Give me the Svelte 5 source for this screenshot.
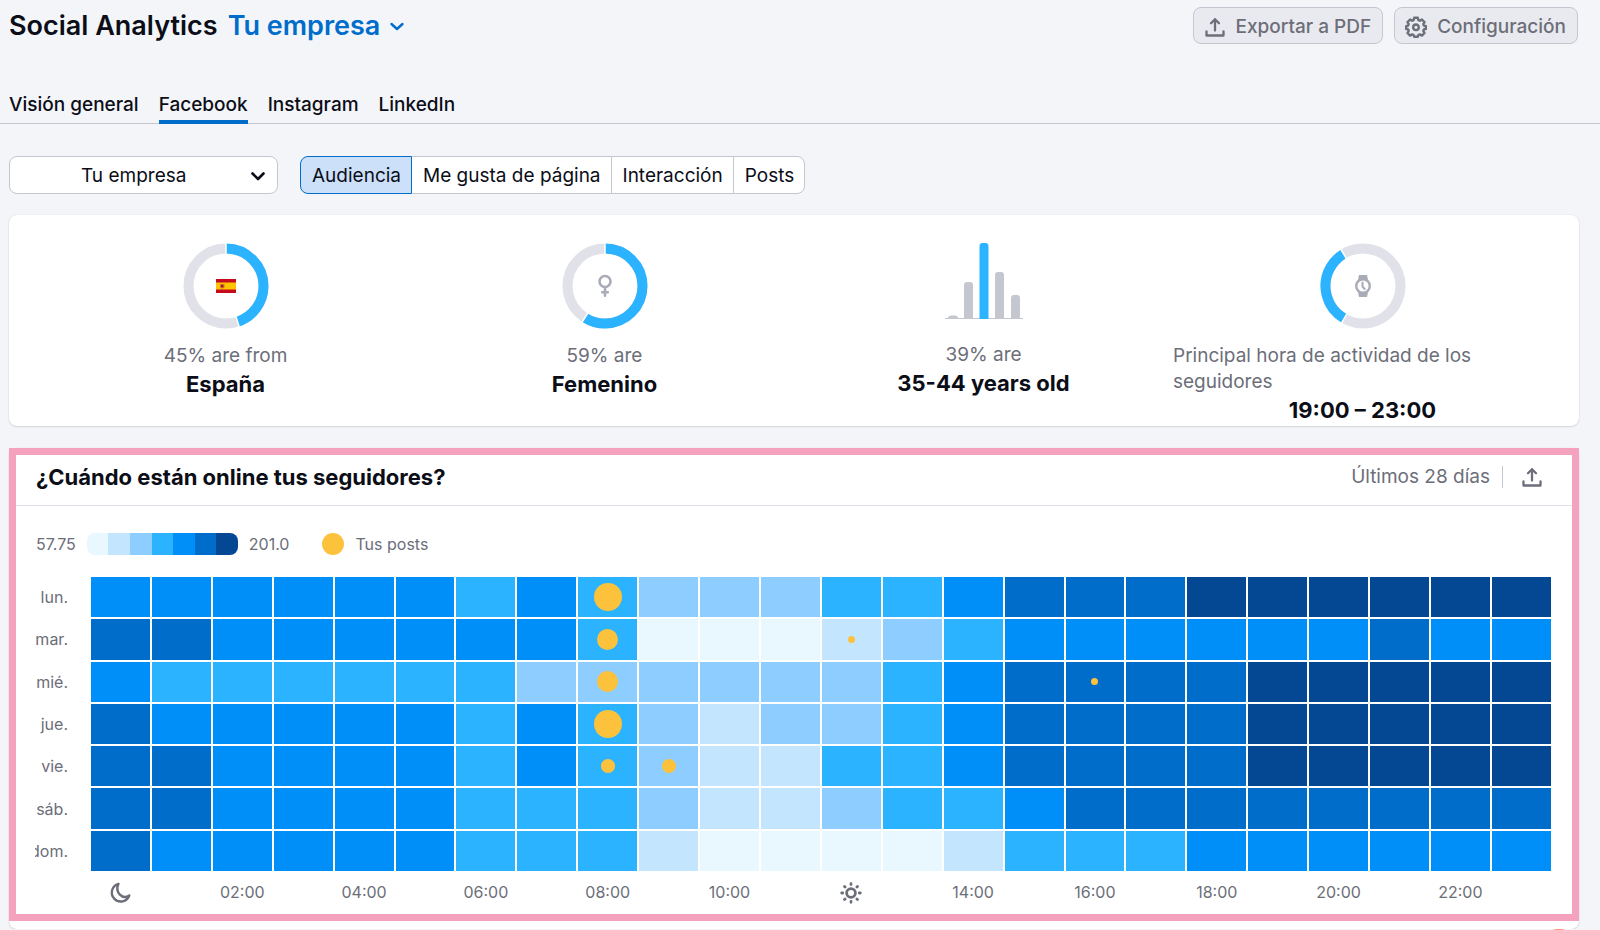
<script>
  const tabs = ['Visión general', 'Facebook', 'Instagram', 'LinkedIn'];
  const sections = ['Audiencia', 'Me gusta de página', 'Interacción', 'Posts'];

  let activeTab = $state('Facebook');
  let activeSection = $state('Audiencia');

  const levels = [1, 2, 3, 4, 5, 6, 7];
  const hours = Array.from({ length: 24 }, (_, h) => h);

  // one digit per hour, 1 = fewest followers online, 7 = most
  const days = [
    { name: 'lun.', cells: '555555454333445666777777', posts: { 8: 28 } },
    { name: 'mar.', cells: '665555554111234555555655', posts: { 8: 21, 12: 7 } },
    { name: 'mié.', cells: '544444433333345666677777', posts: { 8: 21, 16: 7 } },
    { name: 'jue.', cells: '655555454323345666677777', posts: { 8: 28 } },
    { name: 'vie.', cells: '665555454322445666677777', posts: { 8: 14, 9: 14 } },
    { name: 'sáb.', cells: '665555444322344566666666', posts: {} },
    { name: 'dom.', cells: '655555444211112444555555', posts: {} }
  ];

  const pad = (h) => String(h).padStart(2, '0') + ':00';
</script>

<svelte:head>
  <title>Social Analytics</title>
</svelte:head>

{#snippet uploadIcon()}
  <svg width="22" height="22" viewBox="0 0 22 22" fill="none" stroke="currentColor" stroke-width="2.3" stroke-linecap="round" stroke-linejoin="round">
    <path d="M2.5 15.5v4h17v-4M11 14.5V3.2M7 7.2l4-4 4 4" />
  </svg>
{/snippet}

{#snippet donut(share, start)}
  <svg width="86" height="86" viewBox="0 0 86 86" fill="none" stroke-width="10">
    <circle cx="43" cy="43" r="37.5" stroke="#e0e1e9" />
    <g transform="rotate({start} 43 43)">
      <circle cx="43" cy="43" r="37.5" stroke="#2bb3ff" pathLength="100" stroke-dasharray="{share} 100" transform="rotate(-90 43 43)" />
      <path d="M43 0v11" stroke="#fff" stroke-width="1.5" />
      <path d="M43 0v11" stroke="#fff" stroke-width="1.5" transform="rotate({share * 3.6} 43 43)" />
    </g>
  </svg>
{/snippet}

<div class="page">
  <header class="top">
    <h1>Social Analytics</h1>
    <button class="company">
      Tu empresa
      <svg width="16" height="16" viewBox="0 0 16 16" fill="none" stroke="currentColor" stroke-width="2.4" stroke-linecap="round" stroke-linejoin="round">
        <path d="M2.5 6 8 11l5.5-5" />
      </svg>
    </button>
    <div class="actions">
      <button class="btn">{@render uploadIcon()}Exportar a PDF</button>
      <button class="btn">
        <svg width="22" height="22" viewBox="0 0 22 22" fill="none" stroke="currentColor" stroke-width="2.4" stroke-linejoin="round">
          <path d="M9.2 1.8h3.6l.6 2.3 1.5.6 2-1.2 2.6 2.6-1.2 2 .6 1.5 2 .5v2.8l-2 .6-.6 1.5 1.2 2-2.6 2.6-2-1.2-1.5.6-.6 1.8H9.2l-.6-1.8-1.5-.6-2 1.2-2.6-2.6 1.2-2-.6-1.5-1.9-.6v-2.8l1.9-.5.6-1.5-1.2-2 2.6-2.6 2 1.2 1.5-.6z" />
          <circle cx="11" cy="11.3" r="2.8" />
        </svg>
        Configuración
      </button>
    </div>
  </header>

  <nav class="tabs">
    {#each tabs as tab}
      <a href="#{tab}" class:active={tab === activeTab} onclick={() => (activeTab = tab)}>{tab}</a>
    {/each}
  </nav>

  <div class="filters">
    <div class="select">
      <select aria-label="Página">
        <option>Tu empresa</option>
      </select>
      <svg width="16" height="16" viewBox="0 0 16 16" fill="none" stroke="currentColor" stroke-width="2.6" stroke-linecap="round" stroke-linejoin="round">
        <path d="M2.5 5.5 8 11l5.5-5.5" />
      </svg>
    </div>
    <div class="pills">
      {#each sections as section}
        <button class:active={section === activeSection} onclick={() => (activeSection = section)}>{section}</button>
      {/each}
    </div>
  </div>

  <section class="summary">
    <div class="stat">
      <div class="chart">
        {@render donut(45, 0)}
        <svg width="20" height="14" viewBox="0 0 20 14">
          <path fill="#c60b1e" d="M0 0h20v14H0z" />
          <path fill="#ffc400" d="M0 3.5h20v7H0z" />
          <path fill="#c9703a" d="M4 5h4.5v3.5L6.2 9.8 4 8.5z" />
          <path fill="#ad1519" d="M5 6h2.3v2.2H5z" />
        </svg>
      </div>
      <p>45% are from</p>
      <strong>España</strong>
    </div>

    <div class="stat">
      <div class="chart">
        {@render donut(59, 0)}
        <svg width="16" height="24" viewBox="0 0 16 24" fill="none" stroke="#a9abb6" stroke-width="2.6" stroke-linecap="round">
          <circle cx="8" cy="7.5" r="5.5" />
          <path d="M8 13.5v8.3M5.2 18.2h5.6" />
        </svg>
      </div>
      <p>59% are</p>
      <strong>Femenino</strong>
    </div>

    <div class="stat">
      <svg class="bars" width="78" height="76" viewBox="0 0 78 76" fill="#c4c7cf">
        <path d="M0 75h78v1H0z" />
        <path d="M3 75c0-1.5 1.5-2.5 3-2.5h4c1.5 0 3 1 3 2.5z" />
        <path d="M19 75.5V42c0-2 1-3 3-3h3c2 0 3 1 3 3v33.5z" />
        <path fill="#2bb3ff" d="M34.5 76V3c0-2 1-3 3-3h3c2 0 3 1 3 3v73z" />
        <path d="M50 75.5V32c0-2 1-3 3-3h3c2 0 3 1 3 3v43.5z" />
        <path d="M66 75.5V55c0-2 1-3 3-3h3c2 0 3 1 3 3v20.5z" />
      </svg>
      <p>39% are</p>
      <strong>35-44 years old</strong>
    </div>

    <div class="stat">
      <div class="chart">
        {@render donut(33, 210)}
        <svg width="16" height="22" viewBox="0 0 16 22" fill="#a9abb6">
          <path d="M4 0h8l1 5H3zM3 17h10l-1 5H4z" />
          <circle cx="8" cy="11" r="6.8" fill="#fff" stroke="#a9abb6" stroke-width="2.4" />
          <path d="M7.5 7.5v4l2.2 2.5" fill="none" stroke="#a9abb6" stroke-width="2" stroke-linecap="round" />
        </svg>
      </div>
      <p>Principal hora de actividad de los seguidores</p>
      <strong>19:00 – 23:00</strong>
    </div>
  </section>

  <div class="card">
    <section class="online">
      <div class="card-header">
        <h2>¿Cuándo están online tus seguidores?</h2>
        <span class="range">Últimos 28 días</span>
        <button class="export" aria-label="Exportar">{@render uploadIcon()}</button>
      </div>

      <div class="legend">
        <span>57.75</span>
        <div class="scale">
          {#each levels as level}
            <i class="l{level}"></i>
          {/each}
        </div>
        <span>201.0</span>
        <span class="dot"></span>
        <span>Tus posts</span>
      </div>

      <table>
        <colgroup>
          <col class="day-col" />
          <col span="24" />
        </colgroup>
        <tbody>
          {#each days as day}
            <tr>
              <th scope="row"><span>{day.name}</span></th>
              {#each day.cells as level, h}
                <td class="l{level}">
                  {#if day.posts[h]}
                    <i class="post" style="width: {day.posts[h]}px; height: {day.posts[h]}px"></i>
                  {/if}
                </td>
              {/each}
            </tr>
          {/each}
        </tbody>
        <tfoot>
          <tr>
            <td></td>
            {#each hours as h}
              <td>
                {#if h === 0}
                  <svg width="22" height="22" viewBox="0 0 22 22" fill="none" stroke="currentColor" stroke-width="2.4" stroke-linejoin="round">
                    <path d="M9.5 1.8A9 9 0 1 0 20.3 13.5C13.5 18 5.500 10.5 9.5 1.8z" />
                  </svg>
                {:else if h === 12}
                  <svg width="22" height="22" viewBox="0 0 22 22" fill="none" stroke="currentColor" stroke-width="2.8" stroke-linecap="round">
                    <circle cx="11" cy="11" r="4.4" />
                    <path d="M11 1.7v.8M11 19.5v.8M1.7 11h1M19.3 11h1M4.5 4.5l.6.6M16.9 16.9l.6.6M4.5 17.5l.6-.6M16.9 5.1l.6-.6" />
                  </svg>
                {:else if h % 2 === 0}
                  <span>{pad(h)}</span>
                {/if}
              </td>
            {/each}
          </tr>
        </tfoot>
      </table>
    </section>
  </div>
</div>

<button class="help" aria-label="Ayuda"></button>

<style>
  :global(body) {
    background: #f4f5f9;
    color: #0b0d17;
    font-family: Inter, "Liberation Sans", sans-serif;
    font-size: 19px;
    line-height: 26px;
  }
  button, select { font: inherit; color: inherit; cursor: pointer; }
  svg { display: block; flex: none; }
  h1, h2, p { margin: 0; }

  .page { overflow: hidden; }
  .top {
    display: flex;
    align-items: center;
    gap: 10px;
    padding: 7px 22px 0 9px;
  }
  h1 { font-size: 27px; font-weight: 600; line-height: 37px; }
  .company {
    display: flex;
    align-items: center;
    gap: 9px;
    padding: 0;
    border: 0;
    background: none;
    color: #006dca;
    font-size: 27px;
    font-weight: 600;
    line-height: 37px;
  }
  .actions { display: flex; gap: 11px; margin-left: auto; }
  .btn {
    display: flex;
    align-items: center;
    gap: 10px;
    height: 37px;
    padding: 2px 11px 0 10px;
    border: 1px solid #c4c7cf;
    border-radius: 8px;
    background: #e9eaef;
    color: #6c6e79;
    font-weight: 500;
  }

  .tabs {
    display: flex;
    gap: 20px;
    margin-top: 48px;
    padding: 0 9px;
    border-bottom: 1px solid #c4c7cf;
  }
  .tabs a {
    height: 28px;
    margin-bottom: -1px;
    border-bottom: 4px solid transparent;
    color: inherit;
    font-weight: 500;
    text-decoration: none;
  }
  .tabs a.active { border-color: #006dca; }

  .filters { display: flex; gap: 22px; padding: 32px 9px 0; }
  .select { position: relative; width: 269px; }
  .select select {
    width: 100%;
    height: 38px;
    padding: 2px 40px 0 71px;
    border: 1px solid #c4c7cf;
    border-radius: 8px;
    background: #fff;
    appearance: none;
  }
  .select svg { position: absolute; top: 12px; right: 12px; pointer-events: none; }
  .pills { display: flex; }
  .pills button {
    height: 38px;
    margin-left: -1px;
    padding: 2px 10px 0 11px;
    border: 1px solid #c4c7cf;
    background: #fff;
  }
  .pills button:first-child { margin-left: 0; border-radius: 8px 0 0 8px; }
  .pills button:last-child { border-radius: 0 8px 8px 0; }
  .pills .active { z-index: 1; border-color: #006dca; background: #cce0fa; }

  .summary {
    display: grid;
    grid-template-columns: repeat(4, 1fr);
    margin: 21px 21px 0 9px;
    padding: 28px 27px 2px;
    border-radius: 8px;
    background: #fff;
    box-shadow: 0 0 1px rgba(25, 27, 35, 0.16), 0 1px 2px rgba(25, 27, 35, 0.12);
  }
  .stat { display: flex; flex-direction: column; align-items: center; }
  .stat p { margin-top: 14px; color: #6c6e79; }
  .stat strong { margin-top: 1px; font-size: 22px; font-weight: 700; line-height: 28px; }
  .chart { display: grid; place-items: center; }
  .chart > :global(*) { grid-area: 1 / 1; }
  .bars { margin-bottom: 9px; }

  .card {
    margin: 22px 21px 0 9px;
    padding-bottom: 8px;
    border-radius: 8px;
    background: #fff;
    box-shadow: 0 0 1px rgba(25, 27, 35, 0.16), 0 1px 2px rgba(25, 27, 35, 0.12);
  }
  .online { border: 7px solid #f5a2bf; }
  .card-header {
    display: flex;
    align-items: center;
    height: 44px;
    padding: 0 29px 6px 20px;
    border-bottom: 1px solid #e0e1e9;
  }
  h2 { font-size: 22px; font-weight: 700; line-height: 28px; }
  .range {
    margin-left: auto;
    padding-right: 12px;
    border-right: 1px solid #c4c7cf;
    color: #6c6e79;
    line-height: 22px;
  }
  .export { margin-left: 18px; padding: 0; border: 0; background: none; color: #6c6e79; }

  .legend {
    display: flex;
    align-items: center;
    gap: 11px;
    padding: 27px 20px 0;
    color: #6c6e79;
    font-size: 16px;
    line-height: 22px;
  }
  .scale { display: flex; width: 151px; height: 22px; border-radius: 8px; overflow: hidden; }
  .scale i { flex: 1; }
  .dot { width: 22px; height: 22px; margin-left: 22px; border-radius: 50%; background: #fdc23c; }

  table {
    width: calc(100% - 36px);
    height: 338px;
    margin: 20px 19px 1px 17px;
    border-spacing: 2px;
    table-layout: fixed;
    color: #6c6e79;
    font-size: 16px;
    line-height: 22px;
  }
  .day-col { width: 54px; }
  th, td { height: 40px; padding: 0; }
  th { font-weight: 400; }
  th span { display: flex; justify-content: flex-end; width: 33px; overflow: hidden; }
  tfoot td { height: 38px; text-align: center; }
  tfoot svg { margin: 2px auto 0; }
  tfoot span { display: flex; justify-content: center; }
  .post { display: block; margin: 0 auto; border-radius: 50%; background: #fdc23c; }

  .l1 { background: #e9f7ff; }
  .l2 { background: #c4e5fe; }
  .l3 { background: #8ecdff; }
  .l4 { background: #2bb3ff; }
  .l5 { background: #008ff8; }
  .l6 { background: #006dca; }
  .l7 { background: #044792; }

  .help {
    position: fixed;
    right: 23px;
    bottom: -35px;
    width: 36px;
    height: 36px;
    padding: 0;
    border: 0;
    border-radius: 50%;
    background: #ff8a70;
  }
</style>
